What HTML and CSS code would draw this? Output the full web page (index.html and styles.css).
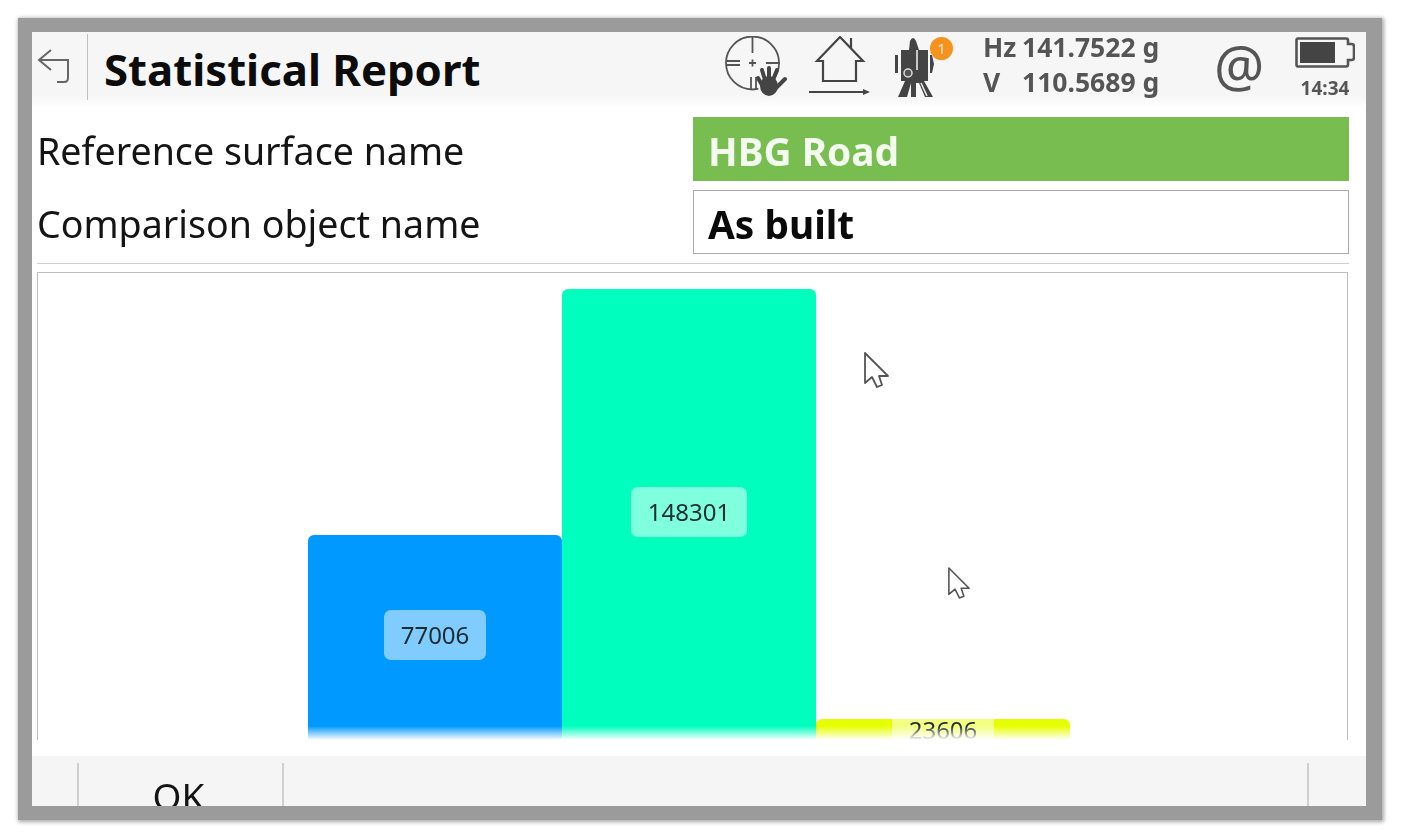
FILE: index.html
```html
<!DOCTYPE html>
<html lang="en">
<head>
<meta charset="utf-8">
<title>Statistical Report</title>
<link rel="stylesheet" href="styles.css">
</head>
<body>
<div class="frame">
  <header class="header">
    <svg class="back" viewBox="0 0 32 36" width="32" height="36"><path d="M14 2 2 12 14 22M2 12H31V30Q31 34 27 34H20"/></svg>
    <span class="sep"></span>
    <h1 class="title">Statistical Report</h1>
    <div class="status">
      <svg class="ic-aim" viewBox="0 0 62 62" width="62" height="62">
        <circle class="ln" cx="27.500" cy="27" r="26.500"/>
        <path class="ln" d="M27.500 1V17M1 25H15M1 29H15M41 27H55M26 41V54M31 41V54M24 27H31M27.500 23.500V30.500"/>
        <ellipse class="fill halo" cx="44" cy="50" rx="10" ry="11"/>
        <path class="finger" d="M37 49 33 42M40 44 37 34M44 43 44 32M48 44 52 34M51 52 60 43"/>
      </svg>
      <svg class="ic-home" viewBox="0 0 61 61" width="61" height="61">
        <path class="ln2" d="M31 1 8 25H14V45H47V25H54ZM42 2V13"/>
        <path class="ln2" d="M0 56H59"/>
        <path class="fill" d="M54 53 61 56 54 59Z"/>
      </svg>
      <span class="station">
        <svg viewBox="0 0 40 62" width="40" height="62">
          <path class="fill" d="M15 5Q18 -1 21 5L24 14H33V45H29L38 61H30L24 47H21V61H16V47L12 61H3L10 45H6V14H14Z"/>
          <path class="fill" d="M0 19H3V37H0ZM35 19H37L39 28 37 37H35Z"/>
          <path class="cut" d="M22 14V34M26 47 32 60"/>
          <circle class="hole" cx="13" cy="37" r="4"/>
        </svg>
        <span class="badge">1</span>
      </span>
      <div class="angles">
        <span>Hz</span><span>141.7522 g</span>
        <span>V</span><span>110.5689 g</span>
      </div>
      <span class="at">@</span>
      <div class="power">
        <svg viewBox="0 0 60 31" width="60" height="31">
          <path class="ln3" d="M3 1.500H51Q53 1.500 53 3.500V7H57Q59 7 59 10V20Q59 23 57 23H53V27.500Q53 29.500 51 29.500H3Q1.500 29.500 1.500 27.500V3.500Q1.500 1.500 3 1.500Z"/>
          <rect class="fill" x="5" y="5" width="35" height="21"/>
        </svg>
        <span class="clock">14:34</span>
      </div>
    </div>
  </header>

  <main class="main">
    <div class="row">
      <span class="label">Reference surface name</span>
      <span class="field field-green">HBG Road</span>
    </div>
    <div class="row">
      <span class="label">Comparison object name</span>
      <span class="field field-plain">As built</span>
    </div>
    <div class="rule"></div>
    <section class="chart">
      <div class="bar bar-blue"><span class="pill">77006</span></div>
      <div class="bar bar-green"><span class="pill">148301</span></div>
      <div class="bar bar-yellow"><span class="pill">23606</span></div>
    </section>
  </main>

  <footer class="footer">
    <span class="slot slot-first"></span>
    <span class="slot slot-ok">OK</span>
    <span class="slot slot-wide"></span>
    <span class="slot slot-last"></span>
  </footer>

  <svg class="cursor cursor-a" viewBox="0 0 25 36" width="25" height="36"><path d="M1 1V31L8 25 13 35 18 33 15 24H24Z"/></svg>
  <svg class="cursor cursor-b" viewBox="0 0 25 36" width="22" height="32"><path d="M1 1V31L8 25 13 35 18 33 15 24H24Z"/></svg>
</div>
</body>
</html>
```
FILE: styles.css
```css
* { box-sizing: border-box; }
html, body { margin: 0; height: 838px; overflow: hidden; background: #fff; }
body { font-family: "Noto Sans", "Open Sans", sans-serif; color: #111; }

.frame {
  position: relative;
  width: 1364px;
  height: 802px;
  margin: 18px 0 0 18px;
  border: 14px solid #9b9b9b;
  border-right-width: 16px;
  box-shadow: 1px 1px 4px 1px #a8a8a8;
  display: flex;
  flex-direction: column;
  background: #fff;
  filter: blur(0.5px);
}

.header {
  height: 76px;
  flex: none;
  display: flex;
  align-items: center;
  padding-left: 5px;
  background: linear-gradient(#f6f6f6 84%, #fff);
}
.back { flex: none; fill: none; stroke: #666; stroke-width: 2; margin-top: -8px; }
.sep { width: 1px; height: 66px; margin: -6px 0 0 18px; background: #c0c0c0; flex: none; }
.title { margin: 0 0 0 16px; font-size: 43.7px; font-weight: 700; line-height: 1; color: #0c0c0c; white-space: nowrap; }

.status { margin-left: auto; display: flex; align-items: flex-start; height: 100%; color: #555; padding-right: 11px; }
.ln { fill: none; stroke: #555; stroke-width: 1.8; }
.ln2 { fill: none; stroke: #444; stroke-width: 2.2; }
.ln3 { fill: none; stroke: #555; stroke-width: 2.6; }
.fill { fill: #444; }
.halo { stroke: #f6f6f6; stroke-width: 2; }
.finger { fill: none; stroke: #444; stroke-width: 4; stroke-linecap: round; }
.cut { fill: none; stroke: #e8e8e8; stroke-width: 1.6; }
.hole { fill: #555; stroke: #ddd; stroke-width: 1.5; }

.ic-aim { margin-top: 4px; flex: none; }
.ic-home { margin: 4px 0 0 22px; flex: none; }
.station { position: relative; width: 60px; margin: 4px 0 0 25px; flex: none; }
.station svg { display: block; }
.badge {
  position: absolute; left: 35px; top: 1px;
  width: 23px; height: 23px; border-radius: 50%;
  background: #f6921e; color: #ffe9cf;
  font-size: 15px; line-height: 23px; text-align: center;
}
.angles {
  margin: -2px 0 0 28px; width: 178px; flex: none;
  display: grid; grid-template-columns: 39px 1fr;
  font-size: 26.5px; font-weight: 700; line-height: 35px; color: #555;
  white-space: nowrap;
}
.at { margin: 1px 0 0 53px; width: 81px; font-size: 56px; line-height: 64px; color: #555; flex: none; }
.power { width: 60px; flex: none; display: flex; flex-direction: column; align-items: center; padding-top: 5px; }
.power svg { display: block; }
.clock { font-size: 19px; font-weight: 700; line-height: 24px; margin-top: 8px; color: #555; }

.main { flex: 1; display: flex; flex-direction: column; min-height: 0; padding: 9px 17px 0 5px; }
.row { display: grid; grid-template-columns: 656px 656px; height: 64px; margin-bottom: 9px; flex: none; align-items: center; }
.label { font-size: 37.6px; line-height: 56px; margin-top: 4px; color: #141414; }
.field { height: 64px; display: flex; align-items: center; padding: 3px 0 0 15px; font-size: 38.8px; font-weight: 700; }
.field-green { background: #77bd4f; color: #f4fbef; }
.field-plain { border: 1px solid #ababab; color: #0a0a0a; background: #fff; padding-left: 14px; }
.rule { height: 1px; background: #cfcfcf; flex: none; margin-bottom: 8px; }

.chart {
  position: relative;
  flex: 1;
  width: 1311px;
  min-height: 0;
  margin-bottom: 16px;
  padding: 0 0 0 270px;
  border: 1px solid #bdbdbd;
  border-bottom: 0;
  display: flex;
  align-items: flex-end;
  overflow: hidden;
}
.chart::after {
  content: "";
  position: absolute;
  left: -1px; right: -1px; bottom: 0;
  height: 14px;
  background: linear-gradient(rgba(255,255,255,0), #fff);
}
.bar { width: 254px; flex: none; display: flex; align-items: center; justify-content: center; border-radius: 6px 6px 0 0; }
.bar-blue { height: 205px; padding-bottom: 5px; background: #0099ff; }
.bar-green { height: 451px; padding-bottom: 5px; background: #00ffbf; }
.bar-yellow { height: 21px; background: #e6ff00; }
.pill { flex: none; padding: 0 16.5px; height: 50px; line-height: 50px; font-size: 24px; border-radius: 7px; color: #1d2b33; background: rgba(255,255,255,.5); }

.footer { height: 50px; flex: none; display: flex; align-items: stretch; background: #f5f5f5; overflow: hidden; padding-top: 7px; }
.slot { flex: none; border-right: 2px solid #cfcfcf; }
.slot-first { width: 47px; }
.slot-ok { width: 205px; text-align: center; font-size: 37px; line-height: 50px; padding: 8px 4px 0 0; color: #141414; }
.slot-wide { width: 1025px; }
.slot-last { flex: 1; border-right: 0; }

.cursor { position: absolute; fill: #fff; stroke: #555; stroke-width: 1.8; stroke-linejoin: round; }
.cursor-a { left: 832px; top: 320px; }
.cursor-b { left: 916px; top: 535px; }
```
